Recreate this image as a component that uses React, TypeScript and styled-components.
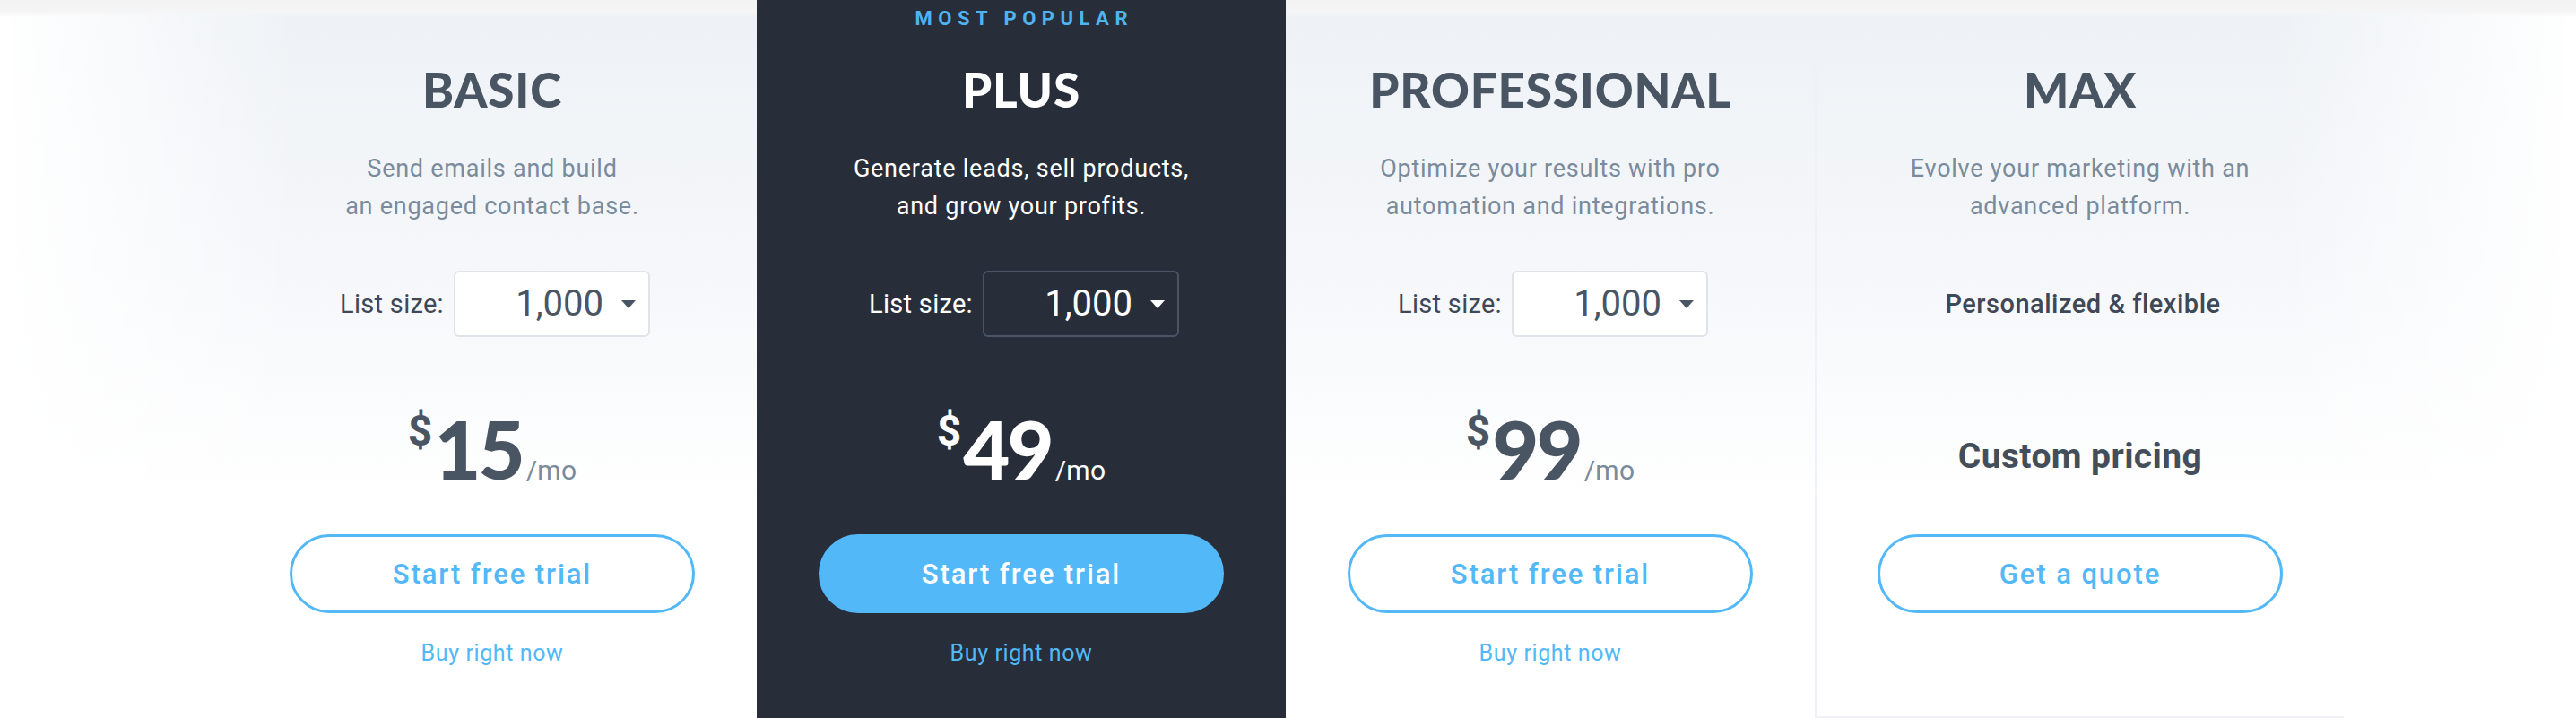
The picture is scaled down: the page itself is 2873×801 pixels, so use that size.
import React from "react";
import styled, { createGlobalStyle } from "styled-components";

const GlobalStyle = createGlobalStyle`
  html, body {
    margin: 0;
    padding: 0;
    background: #ffffff;
  }
  body {
    font-family: Roboto, "Liberation Sans", Arial, sans-serif;
    -webkit-font-smoothing: antialiased;
  }
  * { box-sizing: border-box; }
`;

const BLUE = "#52b8f7";
const DARK = "#282e39";
const INK = "#4a5563";
const MUTED = "#7a8b9c";

const Page = styled.main`
  width: 100%;
  height: 801px;
  overflow: hidden;
  display: flex;
  justify-content: center;
  background:
    linear-gradient(to bottom, #f3f3f4 0, #f5f5f6 13px, rgba(246, 246, 247, 0) 19px),
    linear-gradient(
      to right,
      #ffffff 0,
      rgba(255, 255, 255, 0) 330px,
      rgba(255, 255, 255, 0) calc(100% - 330px),
      #ffffff 100%
    ),
    linear-gradient(to bottom, #eef2f6 17px, #f5f7fa 300px, #ffffff 560px);
`;

const Plans = styled.section`
  display: grid;
  grid-template-columns: repeat(4, 590px);
  height: 801px;
  margin-right: 5px;
`;

const Column = styled.article<{ $featured?: boolean; $card?: boolean }>`
  display: flex;
  flex-direction: column;
  align-items: center;
  padding-top: ${(p) => (p.$featured ? "8px" : p.$card ? "32.5px" : "69.5px")};
  margin-top: ${(p) => (p.$card ? "37px" : "0")};
  background: ${(p) => (p.$featured ? DARK : "transparent")};
  border-left: ${(p) => (p.$card ? "2px solid #eef1f5" : "none")};
  border-bottom: ${(p) => (p.$card ? "2px solid #eef1f5" : "none")};
`;

const Badge = styled.div`
  font-family: Roboto, "Liberation Sans", sans-serif;
  font-weight: 700;
  font-size: 22px;
  line-height: 26px;
  letter-spacing: 6.5px;
  margin-right: -6.5px;
  color: #4fb3f2;
  text-transform: uppercase;
  margin-bottom: 35.5px;
`;

const Title = styled.h2<{ $light?: boolean }>`
  margin: 0;
  font-family: Lato, "Open Sans", sans-serif;
  font-weight: 900;
  font-size: 53px;
  line-height: 60px;
  letter-spacing: 0.8px;
  text-transform: uppercase;
  color: ${(p) => (p.$light ? "#ffffff" : INK)};
`;

const Description = styled.p<{ $light?: boolean }>`
  margin: 37.5px 0 0;
  font-size: 27px;
  line-height: 42px;
  text-align: center;
  letter-spacing: 0.75px;
  color: ${(p) => (p.$light ? "#ffffff" : MUTED)};
`;

const OptionRow = styled.div`
  margin-top: 51px;
  margin-left: 6px;
  height: 74px;
  display: flex;
  align-items: center;
  gap: 11px;
`;

const RowLabel = styled.span<{ $light?: boolean; $strong?: boolean }>`
  font-size: 29px;
  letter-spacing: ${(p) => (p.$strong ? "0.5px" : "0.3px")};
  font-weight: ${(p) => (p.$strong ? 500 : 400)};
  color: ${(p) => (p.$light ? "#ffffff" : "#3f4856")};
`;

const SelectBox = styled.div<{ $dark?: boolean }>`
  width: 219px;
  height: 74px;
  border-radius: 6px;
  border: 2px solid ${(p) => (p.$dark ? "#4a5464" : "#dfe4eb")};
  background: ${(p) => (p.$dark ? "transparent" : "#ffffff")};
  display: flex;
  align-items: center;
  justify-content: flex-end;
  gap: 20px;
  padding-right: 14px;
  color: ${(p) => (p.$dark ? "#ffffff" : INK)};
`;

const SelectValue = styled.span`
  font-size: 40px;
  line-height: 1;
`;

const Caret = styled.span`
  width: 0;
  height: 0;
  border-left: 8.5px solid transparent;
  border-right: 8.5px solid transparent;
  border-top: 9px solid currentColor;
`;

const Price = styled.div<{ $light?: boolean }>`
  margin-top: 79px;
  height: 90px;
  display: flex;
  align-items: baseline;
  color: ${(p) => (p.$light ? "#ffffff" : INK)};
`;

const Currency = styled.span`
  align-self: flex-start;
  margin-top: 2px;
  margin-right: 2px;
  font-weight: 700;
  font-size: 48px;
  line-height: 48px;
`;

const Amount = styled.span`
  font-family: Lato, "Open Sans", sans-serif;
  font-weight: 900;
  font-size: 90px;
  line-height: 90px;
  letter-spacing: -3px;
`;

const Period = styled.span<{ $light?: boolean }>`
  margin-left: 4px;
  font-size: 30px;
  letter-spacing: 0.3px;
  color: ${(p) => (p.$light ? "#ffffff" : MUTED)};
`;

const CustomPrice = styled.div`
  margin-top: 79px;
  height: 90px;
  padding-top: 35px;
  font-weight: 700;
  font-size: 39px;
  line-height: 38px;
  letter-spacing: 0.4px;
  color: #444e5b;
`;

const CtaButton = styled.button<{ $filled?: boolean }>`
  margin-top: 51px;
  width: 452px;
  height: 88px;
  border-radius: 44px;
  border: 3px solid ${BLUE};
  background: ${(p) => (p.$filled ? BLUE : "transparent")};
  color: ${(p) => (p.$filled ? "#ffffff" : BLUE)};
  font-family: Roboto, "Liberation Sans", sans-serif;
  font-weight: 500;
  font-size: 31px;
  letter-spacing: 1.9px;
  cursor: pointer;
`;

const BuyLink = styled.a`
  margin-top: 30px;
  font-size: 25px;
  line-height: 30px;
  letter-spacing: 0.6px;
  color: ${BLUE};
  text-decoration: none;
`;

type Plan = {
  name: string;
  lines: string[];
  price?: string;
  featured?: boolean;
};

const plans: Plan[] = [
  { name: "Basic", lines: ["Send emails and build", "an engaged contact base."], price: "15" },
  {
    name: "Plus",
    lines: ["Generate leads, sell products,", "and grow your profits."],
    price: "49",
    featured: true,
  },
  {
    name: "Professional",
    lines: ["Optimize your results with pro", "automation and integrations."],
    price: "99",
  },
];

function PlanColumn({ plan }: { plan: Plan }) {
  const light = !!plan.featured;
  return (
    <Column $featured={light}>
      {light && <Badge>Most Popular</Badge>}
      <Title $light={light}>{plan.name}</Title>
      <Description $light={light}>
        {plan.lines[0]}
        <br />
        {plan.lines[1]}
      </Description>
      <OptionRow>
        <RowLabel $light={light}>List size:</RowLabel>
        <SelectBox $dark={light}>
          <SelectValue>1,000</SelectValue>
          <Caret />
        </SelectBox>
      </OptionRow>
      <Price $light={light}>
        <Currency>$</Currency>
        <Amount>{plan.price}</Amount>
        <Period $light={light}>/mo</Period>
      </Price>
      <CtaButton $filled={light}>Start free trial</CtaButton>
      <BuyLink href="#">Buy right now</BuyLink>
    </Column>
  );
}

export default function App() {
  return (
    <>
      <GlobalStyle />
      <Page>
        <Plans>
          {plans.map((p) => (
            <PlanColumn key={p.name} plan={p} />
          ))}
          <Column $card>
            <Title>Max</Title>
            <Description>
              Evolve your marketing with an
              <br />
              advanced platform.
            </Description>
            <OptionRow>
              <RowLabel $strong>Personalized &amp; flexible</RowLabel>
            </OptionRow>
            <CustomPrice>Custom pricing</CustomPrice>
            <CtaButton>Get a quote</CtaButton>
          </Column>
        </Plans>
      </Page>
    </>
  );
}
